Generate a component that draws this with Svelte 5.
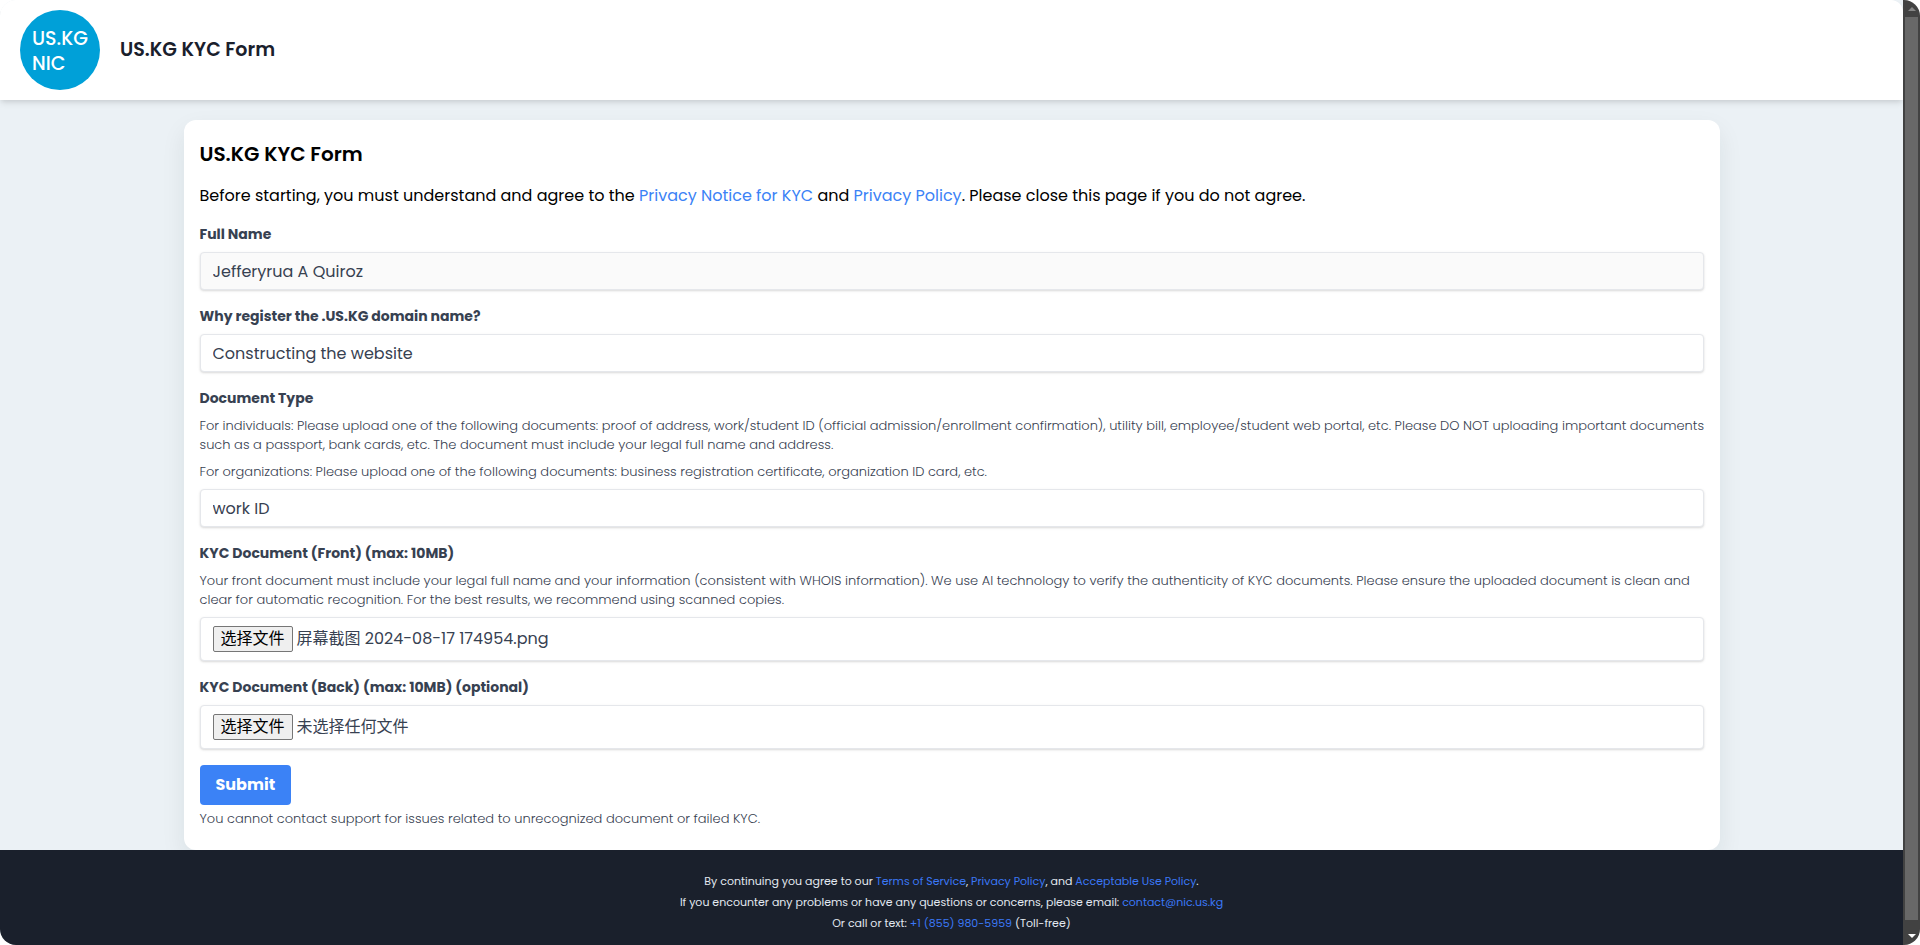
<script>
	let fullName = $state('Jefferyrua A Quiroz');
	let reason = $state('Constructing the website');
	let documentType = $state('work ID');

	let frontInput;
	let backInput;
	let frontFile = $state('屏幕截图 2024-08-17 174954.png');
	let backFile = $state('');

	function fileName(event) {
		return event.currentTarget.files[0]?.name ?? '';
	}
</script>

<div class="window">
	<div class="page">
		<header>
			<svg class="logo" viewBox="0 0 80 80" role="img" aria-label="US.KG NIC">
				<circle cx="40" cy="40" r="40" />
				<text x="12" y="35">US.KG</text>
				<text x="12" y="60">NIC</text>
			</svg>
			<span class="brand">US.KG KYC Form</span>
		</header>

		<main>
			<form class="card" onsubmit={(e) => e.preventDefault()}>
				<h1>US.KG KYC Form</h1>
				<p class="intro">
					Before starting, you must understand and agree to the <a href="#notice">Privacy Notice for KYC</a> and
					<a href="#privacy">Privacy Policy</a>. Please close this page if you do not agree.
				</p>

				<div class="field">
					<label for="name">Full Name</label>
					<input class="control" id="name" type="text" bind:value={fullName} readonly />
				</div>

				<div class="field">
					<label for="reason">Why register the .US.KG domain name?</label>
					<input class="control" id="reason" type="text" bind:value={reason} />
				</div>

				<div class="field">
					<label for="type">Document Type</label>
					<p class="hint">
						For individuals: Please upload one of the following documents: proof of address, work/student ID (official
						admission/enrollment confirmation), utility bill, employee/student web portal, etc. Please DO NOT uploading
						important documents such as a passport, bank cards, etc. The document must include your legal full name and
						address.
					</p>
					<p class="hint">
						For organizations: Please upload one of the following documents: business registration certificate,
						organization ID card, etc.
					</p>
					<input class="control" id="type" type="text" bind:value={documentType} />
				</div>

				<div class="field">
					<label for="front">KYC Document (Front) (max: 10MB)</label>
					<p class="hint">
						Your front document must include your legal full name and your information (consistent with WHOIS
						information). We use AI technology to verify the authenticity of KYC documents. Please ensure the uploaded
						document is clean and clear for automatic recognition. For the best results, we recommend using scanned
						copies.
					</p>
					<div class="control file">
						<input
							id="front"
							type="file"
							hidden
							bind:this={frontInput}
							onchange={(e) => (frontFile = fileName(e))}
						/>
						<button type="button" class="choose" onclick={() => frontInput.click()}>选择文件</button>
						<span>{frontFile || '未选择任何文件'}</span>
					</div>
				</div>

				<div class="field">
					<label for="back">KYC Document (Back) (max: 10MB) (optional)</label>
					<div class="control file">
						<input
							id="back"
							type="file"
							hidden
							bind:this={backInput}
							onchange={(e) => (backFile = fileName(e))}
						/>
						<button type="button" class="choose" onclick={() => backInput.click()}>选择文件</button>
						<span>{backFile || '未选择任何文件'}</span>
					</div>
				</div>

				<button type="submit" class="submit">Submit</button>
				<p class="hint note">You cannot contact support for issues related to unrecognized document or failed KYC.</p>
			</form>
		</main>

		<footer>
			<p>
				By continuing you agree to our <a href="#terms">Terms of Service</a>, <a href="#privacy">Privacy Policy</a>, and
				<a href="#use">Acceptable Use Policy</a>.
			</p>
			<p>
				If you encounter any problems or have any questions or concerns, please email:
				<a href="mailto:contact@nic.us.kg">contact@nic.us.kg</a>
			</p>
			<p>Or call or text: <a href="tel:+18559805959">+1 (855) 980-5959</a> (Toll-free)</p>
		</footer>
	</div>

	<div class="scrollbar" aria-hidden="true">
		<svg class="up" viewBox="0 0 8 4"><path d="M0 4 L4 0 L8 4 Z" /></svg>
		<div class="thumb"></div>
		<svg class="down" viewBox="0 0 8 4"><path d="M0 0 L4 4 L8 0 Z" /></svg>
	</div>
</div>

<style>
	:global(body) {
		margin: 0;
		background: #fff;
	}

	.window {
		display: grid;
		grid-template-columns: minmax(0, 1fr) 17px;
		min-height: 100vh;
		border-radius: 16px;
		overflow: hidden;
		font-family: Poppins, Inter, 'Noto Sans CJK SC', sans-serif;
		font-size: 16px;
		line-height: 24px;
		color: #000;
	}

	.page {
		display: flex;
		flex-direction: column;
		background: #ebf1f5;
	}

	h1,
	p {
		margin: 0;
	}

	a {
		color: #3b82f6;
		text-decoration: none;
	}

	header {
		display: flex;
		align-items: center;
		gap: 20px;
		padding: 10px 20px;
		background: #fff;
		border-radius: 0 12px 0 0;
		box-shadow: 0 4px 6px -1px rgba(0, 0, 0, 0.1), 0 2px 4px -1px rgba(0, 0, 0, 0.06);
	}
	.logo {
		width: 80px;
		height: 80px;
	}
	.logo circle {
		fill: #00a0d8;
	}
	.logo text {
		fill: #fff;
		font-size: 19px;
		font-weight: 500;
	}
	.brand {
		font-size: 19px;
		font-weight: 600;
		color: #1a202c;
	}

	main {
		flex: 1;
		display: flex;
		justify-content: center;
		padding-top: 20px;
	}

	.card {
		box-sizing: border-box;
		width: 100%;
		max-width: 1536px;
		padding: 20px 16px;
		background: #fff;
		border-radius: 12px;
		box-shadow: 0 10px 24px rgba(26, 32, 44, 0.08);
	}
	h1 {
		margin-bottom: 16px;
		font-size: 20px;
		font-weight: 600;
		line-height: 28px;
	}
	.intro {
		margin-bottom: 16px;
	}

	.field {
		margin-bottom: 16px;
	}
	label {
		display: block;
		margin-bottom: 8px;
		font-size: 14px;
		font-weight: 700;
		line-height: 20px;
		color: #374151;
	}
	.hint {
		margin: 0 -8px 8px 0;
		font-size: 13px;
		font-weight: 300;
		line-height: 19px;
		color: #374151;
	}

	.control {
		display: block;
		box-sizing: border-box;
		width: 100%;
		height: 38px;
		padding: 8px 12px;
		border: 1px solid #e5e7eb;
		border-radius: 4px;
		background: #fff;
		box-shadow: 0 1px 3px rgba(0, 0, 0, 0.1), 0 1px 2px rgba(0, 0, 0, 0.06);
		font: inherit;
		line-height: 20px;
		color: #374151;
	}
	.control:read-only:not(.file) {
		background: #fafafa;
	}
	.file {
		display: flex;
		align-items: center;
		gap: 4px;
		height: 44px;
	}
	.choose {
		height: 26px;
		padding: 0 7px;
		border: 1px solid #767676;
		border-radius: 2px;
		background: #efefef;
		font: inherit;
		line-height: 20px;
		color: #000;
	}

	.submit {
		display: block;
		padding: 8px 16px;
		border: 0;
		border-radius: 4px;
		background: #3b82f6;
		font: inherit;
		font-weight: 700;
		color: #fff;
	}
	.note {
		margin: 4px 0 0;
	}

	footer {
		padding: 21px 16px 11px;
		background: #1a202c;
		font-size: 11px;
		line-height: 21px;
		text-align: center;
		color: #e2e8f0;
	}
	footer a {
		color: #3b78f6;
	}

	.scrollbar {
		display: flex;
		flex-direction: column;
		align-items: center;
		gap: 6px;
		padding: 7px 0;
		background: #424242;
	}
	.scrollbar svg {
		width: 8px;
		height: 4px;
	}
	.up {
		fill: #868686;
	}
	.down {
		margin-top: 8px;
		fill: #fff;
	}
	.thumb {
		flex: 1;
		width: 13px;
		background: #686868;
	}
</style>
